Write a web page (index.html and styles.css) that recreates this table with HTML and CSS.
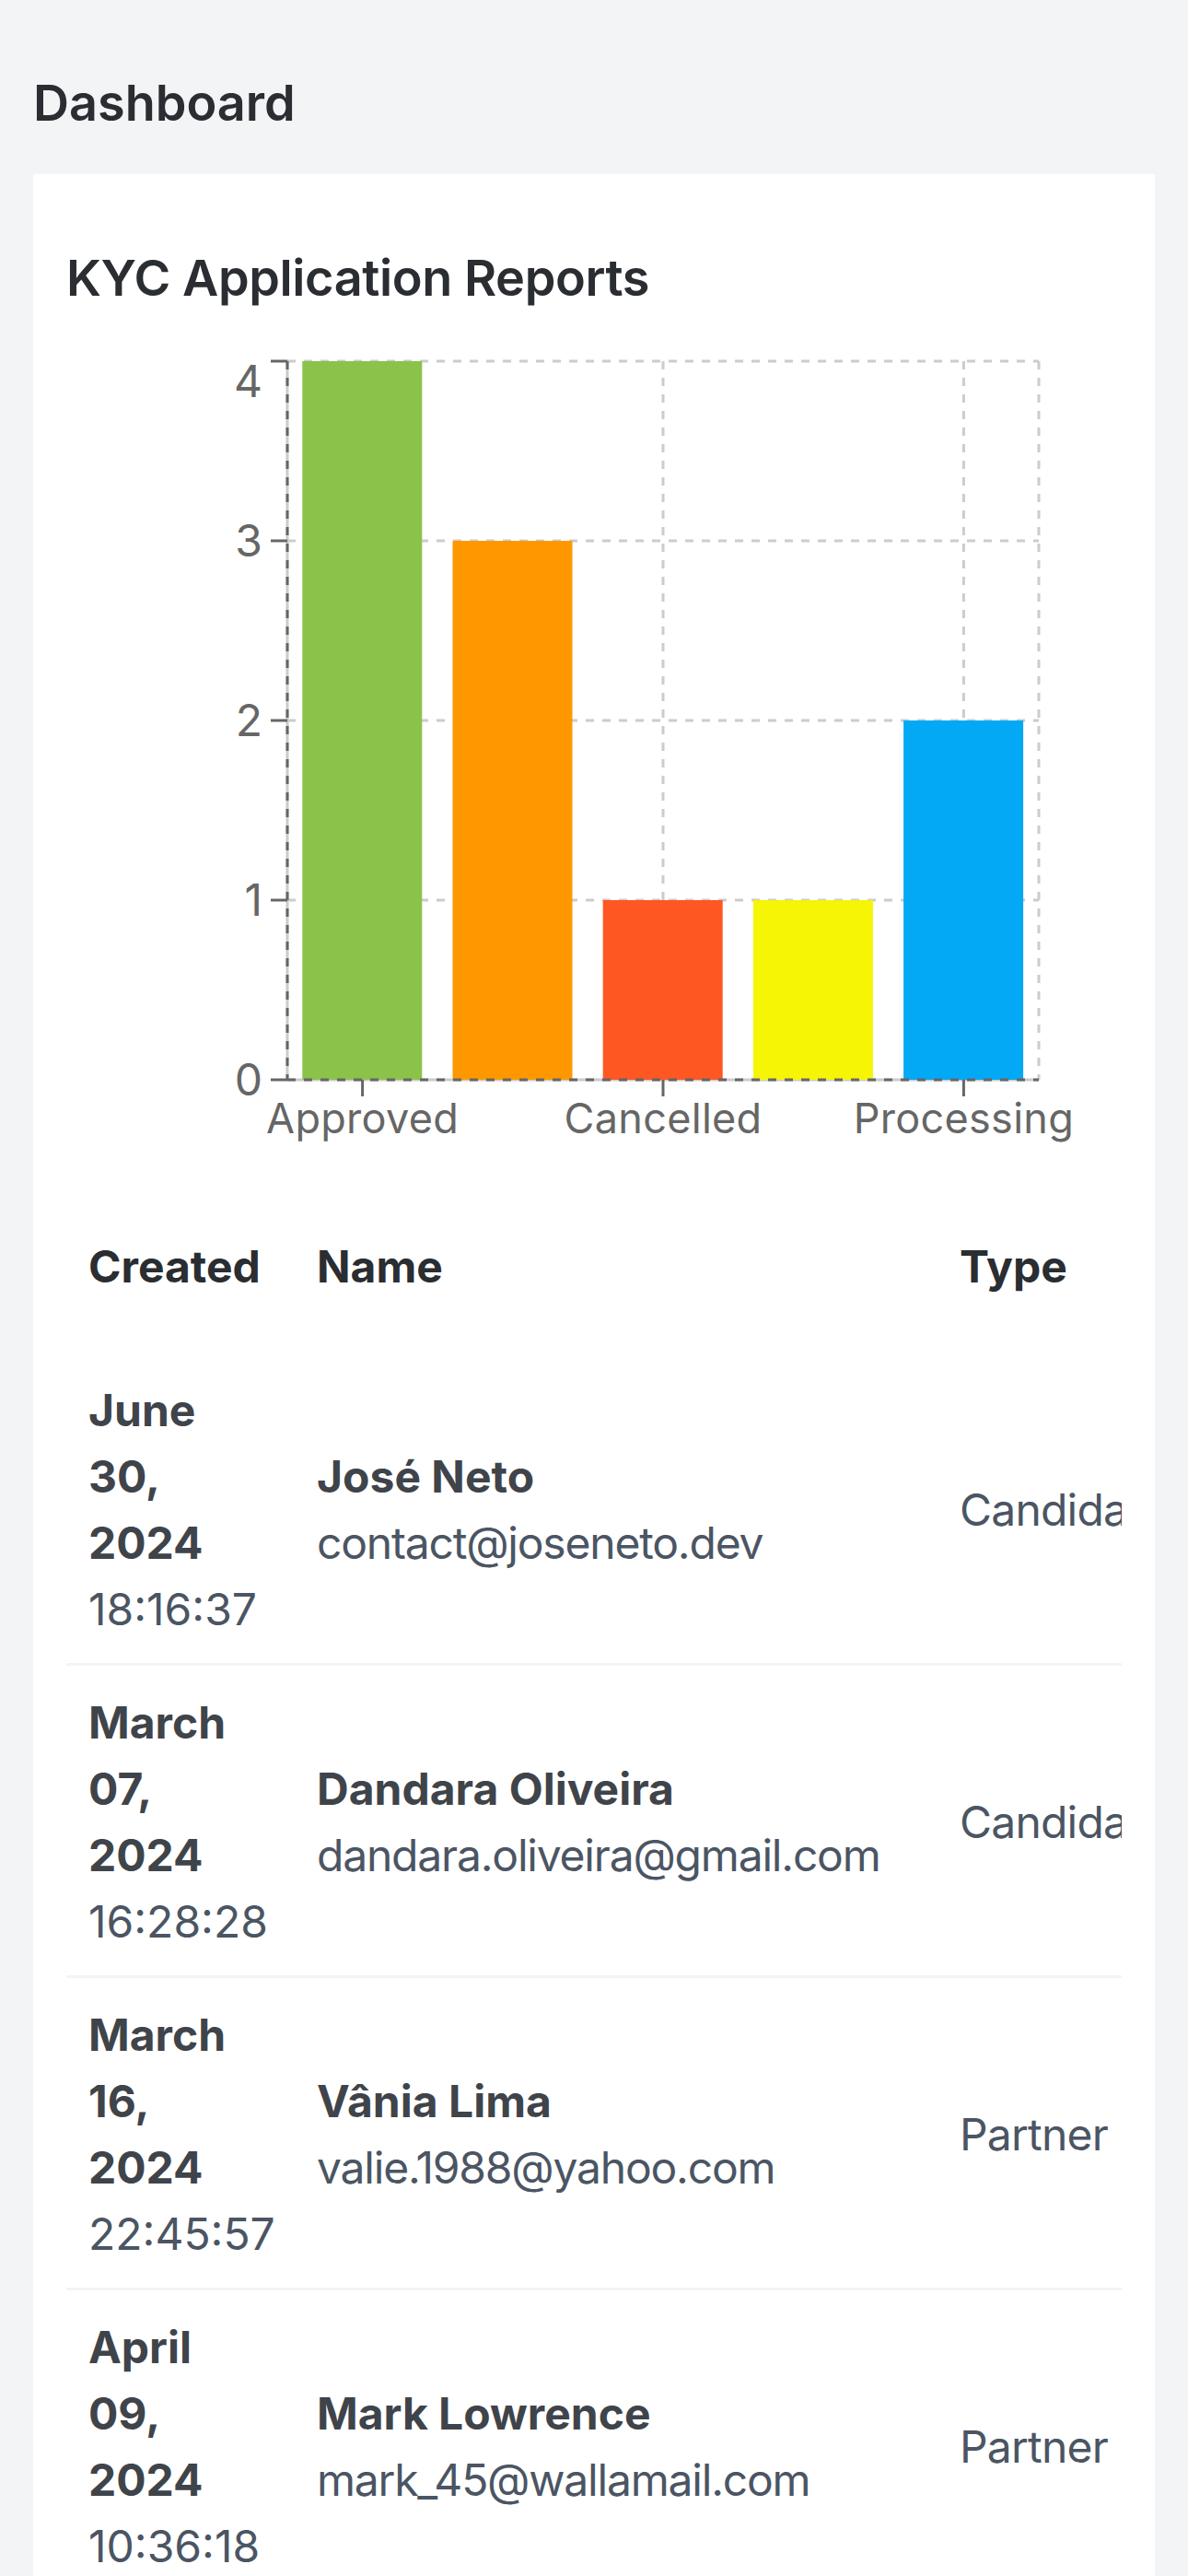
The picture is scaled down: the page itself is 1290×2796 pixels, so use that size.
FILE: index.html
```html
<!DOCTYPE html>
<html lang="en">
<head>
<meta charset="utf-8">
<title>Dashboard</title>
<link rel="stylesheet" href="styles.css">
</head>
<body>
<main class="page">
  <h1 class="page-title">Dashboard</h1>
  <section class="card">
    <h2 class="card-title">KYC Application Reports</h2>
    <div class="chart">
      <svg class="chart-svg" width="1146" height="934" viewBox="0 0 1146 934" xmlns="http://www.w3.org/2000/svg">
        <g class="grid">
          <line x1="240" y1="48" x2="1056" y2="48"/>
          <line x1="240" y1="243" x2="1056" y2="243"/>
          <line x1="240" y1="438" x2="1056" y2="438"/>
          <line x1="240" y1="633" x2="1056" y2="633"/>
          <line x1="321.6" y1="48" x2="321.6" y2="828"/>
          <line x1="648" y1="48" x2="648" y2="828"/>
          <line x1="974.4" y1="48" x2="974.4" y2="828"/>
          <line x1="1056" y1="48" x2="1056" y2="828"/>
        </g>
        <line class="axis-base" x1="240" y1="48" x2="240" y2="828"/>
        <line class="axis-base" x1="240" y1="828" x2="1056" y2="828"/>
        <g class="bars">
          <rect x="256.3" y="48" width="130" height="780" fill="#8bc34a"/>
          <rect x="419.5" y="243" width="130" height="585" fill="#ff9800"/>
          <rect x="582.7" y="633" width="130" height="195" fill="#ff5722"/>
          <rect x="745.9" y="633" width="130" height="195" fill="#f5f505"/>
          <rect x="909.1" y="438" width="130" height="390" fill="#03a9f4"/>
        </g>
        <line class="axis" x1="240" y1="48" x2="240" y2="828"/>
        <line class="axis" x1="240" y1="828" x2="1056" y2="828"/>
        <g class="ticks">
          <line x1="222" y1="48" x2="240" y2="48"/>
          <line x1="222" y1="243" x2="240" y2="243"/>
          <line x1="222" y1="438" x2="240" y2="438"/>
          <line x1="222" y1="633" x2="240" y2="633"/>
          <line x1="222" y1="828" x2="240" y2="828"/>
          <line x1="321.6" y1="828" x2="321.6" y2="846"/>
          <line x1="648" y1="828" x2="648" y2="846"/>
          <line x1="974.4" y1="828" x2="974.4" y2="846"/>
        </g>
        <g class="ylabels">
          <text x="213" y="87">4</text>
          <text x="213" y="260">3</text>
          <text x="213" y="455">2</text>
          <text x="213" y="650">1</text>
          <text x="213" y="845">0</text>
        </g>
        <g class="xlabels">
          <text x="321.6" y="886">Approved</text>
          <text x="648" y="886">Cancelled</text>
          <text x="974.4" y="886">Processing</text>
        </g>
      </svg>
    </div>
    <div class="table-wrap">
      <table class="apps">
        <colgroup>
          <col class="col-created">
          <col class="col-name">
          <col class="col-type">
        </colgroup>
        <thead>
          <tr><th>Created</th><th>Name</th><th>Type</th></tr>
        </thead>
        <tbody>
          <tr>
            <td><div class="date">June 30, 2024</div><div class="time">18:16:37</div></td>
            <td><div class="person">José Neto</div><div class="email">contact@joseneto.dev</div></td>
            <td class="type">Candidate</td>
          </tr>
          <tr>
            <td><div class="date">March 07, 2024</div><div class="time">16:28:28</div></td>
            <td><div class="person">Dandara Oliveira</div><div class="email">dandara.oliveira@gmail.com</div></td>
            <td class="type">Candidate</td>
          </tr>
          <tr>
            <td><div class="date">March 16, 2024</div><div class="time">22:45:57</div></td>
            <td><div class="person">Vânia Lima</div><div class="email">valie.1988@yahoo.com</div></td>
            <td class="type">Partner</td>
          </tr>
          <tr>
            <td><div class="date">April 09, 2024</div><div class="time">10:36:18</div></td>
            <td><div class="person">Mark Lowrence</div><div class="email">mark_45@wallamail.com</div></td>
            <td class="type">Partner</td>
          </tr>
        </tbody>
      </table>
    </div>
  </section>
</main>
</body>
</html>
```
FILE: styles.css
```css
* { box-sizing: border-box; }
html, body {
  margin: 0;
  padding: 0;
  background: #f3f4f6;
  font-family: Inter, "Noto Sans", "Liberation Sans", sans-serif;
  color: #2a2d31;
}
.page {
  padding: 70px 36px 0;
}
.page-title {
  margin: 0 0 35px;
  font-size: 54px;
  line-height: 84px;
  font-weight: 600;
  color: #2a2d31;
}
.card {
  background: #ffffff;
  padding: 71px 36px 72px;
}
.card-title {
  margin: 0;
  font-size: 54px;
  line-height: 84px;
  font-weight: 600;
  letter-spacing: -0.4px;
  color: #2a2d31;
}
.chart-svg {
  display: block;
}
.grid line {
  stroke: #cccccc;
  stroke-width: 3;
  stroke-dasharray: 9 9;
}
.axis-base {
  stroke: #cccccc;
  stroke-width: 3;
}
.axis {
  stroke: #666666;
  stroke-width: 3;
  stroke-dasharray: 9 9;
}
.ticks line {
  stroke: #666666;
  stroke-width: 3;
}
.ylabels text, .xlabels text {
  font-family: Inter, "Noto Sans", "Liberation Sans", sans-serif;
  fill: #666666;
}
.ylabels text {
  font-size: 48px;
  text-anchor: end;
}
.xlabels text {
  font-size: 45px;
  letter-spacing: 0.3px;
  text-anchor: middle;
}
.table-wrap {
  overflow: hidden;
}
.apps {
  border-collapse: collapse;
  table-layout: fixed;
  width: 1249px;
  font-size: 48px;
  line-height: 72px;
}
.col-created { width: 248px; }
.col-name { width: 698px; }
.col-type { width: 303px; }
.apps th {
  text-align: left;
  font-weight: 700;
  color: #2a2d31;
  padding: 61px 24px 58px;
  white-space: nowrap;
}
.apps td {
  padding: 26px 24px 22px;
  vertical-align: middle;
  border-bottom: 3px solid #f3f4f6;
  color: #4b5563;
}
.date {
  width: min-content;
  font-weight: 700;
  color: #3f444a;
}
.time {
  color: #4b5563;
}
.person {
  font-weight: 700;
  color: #3f444a;
  white-space: nowrap;
}
.email {
  color: #4b5563;
  letter-spacing: -1.2px;
  white-space: nowrap;
}
.type {
  letter-spacing: -0.8px;
  white-space: nowrap;
}
```
